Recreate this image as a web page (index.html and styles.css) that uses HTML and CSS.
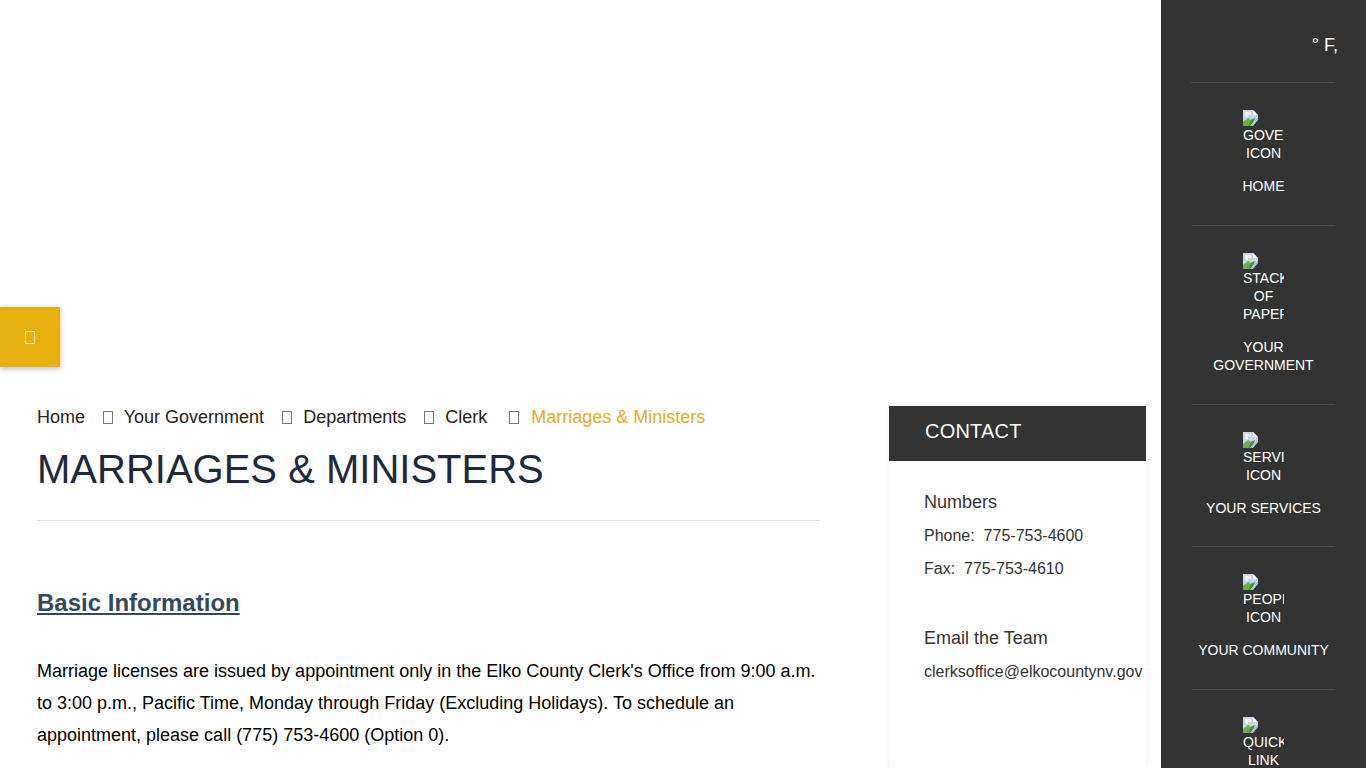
FILE: index.html
```html
<!DOCTYPE html>
<html>
<head>
	<meta charset="utf-8">
	<title>Marriages &amp; Ministers</title>
	<link rel="stylesheet" href="styles.css">
</head>
<body>
	<svg class="defs" width="0" height="0">
		<symbol id="broken-img" viewBox="0 0 16 16">
			<path d="M0 0h10l5 5v3L8 16H0z" fill="#c9d6f0"/>
			<path d="M2 2h6v3H5v2H2z" fill="#eef2fb"/>
			<path d="M10 0l5 5h-5z" fill="#fff"/>
			<path d="M0 16v-4l5-4 3 2 3-2-6 8z" fill="#6fae4d"/>
			<path d="M8 10l4-2-1 3-4 5H5z" fill="#3f8f2e"/>
			<path d="M12 11l3-3v2l-5 6H8z" fill="#b7c4dc"/>
		</symbol>
	</svg>
	<div class="page">
		<main class="main">
			<div class="float-btn"><span class="tofu tofu-light"></span></div>
			<div class="columns">
				<div class="article">
					<div class="crumbs">
						<a class="crumb">Home</a><span class="tofu"></span>
						<a class="crumb">Your Government</a><span class="tofu"></span>
						<a class="crumb">Departments</a><span class="tofu"></span>
						<a class="crumb crumb-last">Clerk</a><span class="tofu"></span>
						<a class="crumb current">Marriages &amp; Ministers</a>
					</div>
					<h1>Marriages &amp; Ministers</h1>
					<h2>Basic Information</h2>
					<p>Marriage licenses are issued by appointment only in the Elko County Clerk's Office from 9:00 a.m. to 3:00 p.m., Pacific Time, Monday through Friday (Excluding Holidays). To schedule an appointment, please call (775) 753-4600 (Option 0).</p>
				</div>
				<aside class="contact">
					<div class="contact-head">CONTACT</div>
					<div class="contact-body">
						<h3>Numbers</h3>
						<div class="line">Phone:&nbsp; 775-753-4600</div>
						<div class="line">Fax:&nbsp; 775-753-4610</div>
						<h3 class="second">Email the Team</h3>
						<div class="line">clerksoffice@elkocountynv.gov</div>
					</div>
				</aside>
			</div>
		</main>
		<nav class="side">
			<div class="weather"><span class="temp">° F,</span></div>
			<a class="item">
				<svg class="broken"><use href="#broken-img"/></svg>
				<span class="alt">GOVERNMENT ICON</span>
				<span class="label">HOME</span>
			</a>
			<a class="item">
				<svg class="broken"><use href="#broken-img"/></svg>
				<span class="alt">STACK OF PAPERS</span>
				<span class="label">YOUR GOVERNMENT</span>
			</a>
			<a class="item">
				<svg class="broken"><use href="#broken-img"/></svg>
				<span class="alt">SERVICES ICON</span>
				<span class="label">YOUR SERVICES</span>
			</a>
			<a class="item">
				<svg class="broken"><use href="#broken-img"/></svg>
				<span class="alt">PEOPLE ICON</span>
				<span class="label">YOUR COMMUNITY</span>
			</a>
			<a class="item">
				<svg class="broken"><use href="#broken-img"/></svg>
				<span class="alt">QUICK LINK ICON</span>
				<span class="label">QUICK LINKS</span>
			</a>
		</nav>
	</div>
</body>
</html>
```
FILE: styles.css
```css
html, body{margin: 0;height: 768px;overflow: hidden;background-color: #fff;font-family: 'Liberation Sans', Arial, sans-serif;}
.defs{display: block;height: 0;}
.page{display: flex;height: 768px;overflow: hidden;}
.main{position: relative;width: 1161px;flex: none;padding-top: 406px;box-sizing: border-box;}

.float-btn{position: absolute;left: 0;top: 307px;width: 60px;height: 60px;background-color: #e8b00f;box-shadow: 0 2px 6px rgba(0,0,0,0.25);display: flex;align-items: center;justify-content: center;}
.tofu{display: inline-block;width: 8px;height: 11px;border: 1px solid #777;vertical-align: -1px;margin: 0 6px 0 18px;}
.tofu-light{border-color: #fff2a8;margin: 0;}

.columns{display: flex;}
.article{width: 783px;margin-left: 37px;flex: none;}
.crumbs{font-size: 18px;line-height: 22px;color: #2a2118;white-space: nowrap;}
.crumb-last{margin-right: 4px;}
.current{color: #e2ae1e;margin-left: 1px;}
h1{font-size: 40px;font-weight: normal;line-height: 46px;margin: 18px 0 0;color: #1e293b;text-transform: uppercase;padding-bottom: 28px;border-bottom: 1px solid #e2e2e2;}
h2{font-size: 24px;font-weight: bold;line-height: 30px;margin: 67px 0 0;color: #34495e;text-decoration: underline;}
p{font-size: 18px;line-height: 32px;margin: 37px 0 0;color: #000;}

.contact{width: 257px;margin-left: 69px;flex: none;height: 362px;box-shadow: 0 0 8px rgba(0,0,0,0.06);}
.contact-head{height: 55px;line-height: 50px;background-color: #333;color: #fff;font-size: 20px;letter-spacing: 0.2px;padding-left: 36px;}
.contact-body{padding: 30px 0 0 35px;color: #333;white-space: nowrap;}
h3{font-size: 18px;font-weight: normal;line-height: 22px;margin: 0;}
h3.second{margin-top: 42px;}
.line{font-size: 16px;line-height: 33px;}
.contact-body h3 + .line{margin-top: 6px;}

.side{width: 205px;flex: none;background-color: #333;color: #fff;box-sizing: border-box;padding: 0 30px;height: 768px;overflow: hidden;}
.weather{font-size: 18px;line-height: 22px;text-align: right;padding: 34px 0 26.3px;border-bottom: 1px solid #4d4d4d;margin-right: 1px;}
.temp{margin-right: -3px;}
.item{display: flex;flex-direction: column;align-items: center;font-size: 14px;line-height: 18px;padding: 27px 0 29.67px;border-bottom: 1px solid #4d4d4d;margin: 0 1px;text-align: center;}
.broken{width: 16px;height: 16px;display: block;margin-right: 25px;flex: none;}
.alt{display: block;width: 41px;overflow: hidden;white-space: normal;word-break: keep-all;}
.label{display: block;margin-top: 15px;}
```
